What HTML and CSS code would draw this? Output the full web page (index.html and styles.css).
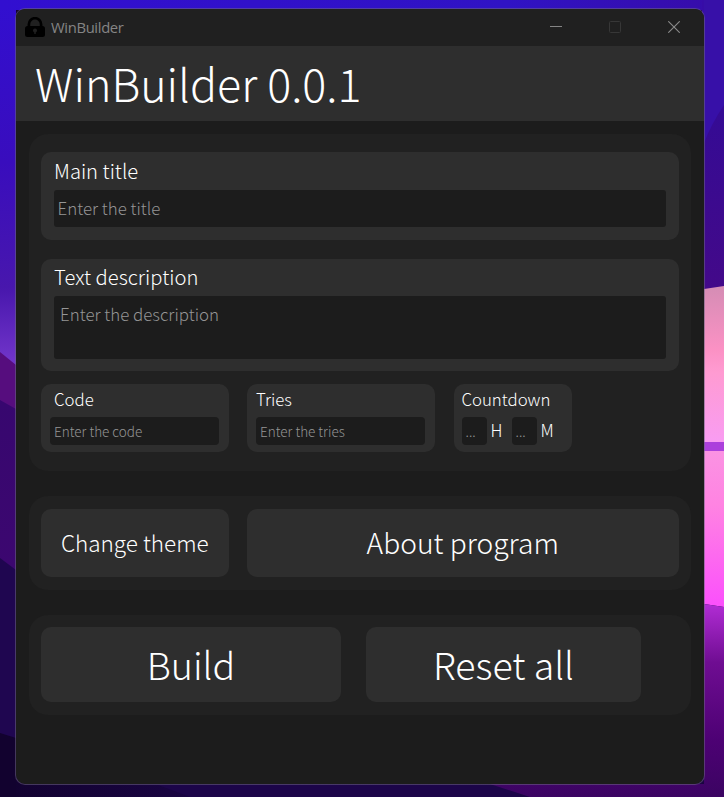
FILE: index.html
```html
<!DOCTYPE html>
<html lang="en">
<head>
<meta charset="utf-8">
<title>WinBuilder</title>
<link rel="stylesheet" href="styles.css">
</head>
<body>
<svg class="wallpaper" viewBox="0 0 724 797" preserveAspectRatio="none" aria-hidden="true">
  <defs>
    <linearGradient id="sky" x1="0" y1="0" x2="0" y2="360" gradientUnits="userSpaceOnUse"><stop offset="0" stop-color="#320fd0"/><stop offset=".45" stop-color="#390dbd"/><stop offset=".8" stop-color="#4817ad"/><stop offset="1" stop-color="#7034c9"/></linearGradient>
    <linearGradient id="top" x1="0" y1="0" x2="724" y2="0" gradientUnits="userSpaceOnUse"><stop offset="0" stop-color="#320fd0"/><stop offset=".7" stop-color="#3013c4"/><stop offset="1" stop-color="#370ca8"/></linearGradient>
    <linearGradient id="left" x1="0" y1="400" x2="0" y2="570" gradientUnits="userSpaceOnUse"><stop offset="0" stop-color="#37076f"/><stop offset="1" stop-color="#3c0770"/></linearGradient>
    <linearGradient id="right" x1="0" y1="0" x2="0" y2="290" gradientUnits="userSpaceOnUse"><stop offset="0" stop-color="#370ca8"/><stop offset=".4" stop-color="#350b94"/><stop offset="1" stop-color="#430989"/></linearGradient>
    <linearGradient id="pink" x1="0" y1="288" x2="0" y2="442" gradientUnits="userSpaceOnUse"><stop offset="0" stop-color="#d68db5"/><stop offset=".4" stop-color="#fb91c4"/><stop offset=".55" stop-color="#ff9bd2"/><stop offset="1" stop-color="#f99cf2"/></linearGradient>
    <linearGradient id="pinkLow" x1="0" y1="451" x2="0" y2="606" gradientUnits="userSpaceOnUse"><stop offset="0" stop-color="#fb93e3"/><stop offset=".35" stop-color="#ff83e2"/><stop offset="1" stop-color="#fb50fc"/></linearGradient>
    <linearGradient id="violet" x1="0" y1="605" x2="0" y2="797" gradientUnits="userSpaceOnUse"><stop offset="0" stop-color="#b02cd3"/><stop offset=".3" stop-color="#6f0d92"/><stop offset=".7" stop-color="#4d0174"/><stop offset="1" stop-color="#3b0462"/></linearGradient>
    <linearGradient id="floor" x1="0" y1="0" x2="724" y2="0" gradientUnits="userSpaceOnUse"><stop offset="0" stop-color="#12022f"/><stop offset=".35" stop-color="#1b0548"/><stop offset="1" stop-color="#1a0441"/></linearGradient>
  </defs>
  <rect width="724" height="797" fill="url(#floor)"/>
  <rect width="16" height="370" fill="url(#sky)"/>
  <rect width="724" height="10" fill="url(#top)"/>
  <path d="M0 352L16 365V575H0z" fill="#560d7e"/>
  <path d="M0 400L16 409V575H0z" fill="url(#left)"/>
  <path d="M0 558L16 570V739H0z" fill="#1f0650"/>
  <path d="M0 733L16 738V797H0z" fill="#12022f"/>
  <path d="M158 785H520V797H190z" fill="#1c0549"/>
  <path d="M702 0H724V290H702z" fill="url(#right)"/>
  <path d="M724 105Q712 123 704 143V0H724z" fill="#3710a8"/>
  <path d="M704 289L724 286V443H704z" fill="url(#pink)"/>
  <path d="M704 442H724V452H704z" fill="#ac40dc"/>
  <path d="M704 451H724V607L704 604z" fill="url(#pinkLow)"/>
  <path d="M704 604L724 607V797H530L490 784H704z" fill="url(#violet)"/>
</svg>
<main class="window">
  <div class="titlebar">
    <svg class="lock" viewBox="0 0 20 20" aria-hidden="true"><path d="M3.9 10V7.2a6.1 6 0 0 1 12.2 0V10" fill="none" stroke="#000" stroke-width="2.7"/><rect y="9" width="20" height="11" rx="2.5"/><circle cx="10" cy="13.5" r="2" fill="#202020"/><path d="M9.3 14h1.4v3H9.3z" fill="#202020"/></svg>
    <span class="app-name">WinBuilder</span>
    <div class="controls">
      <svg viewBox="0 0 12 12"><path d="M0 5.5h12" stroke="#858585"/></svg>
      <svg viewBox="0 0 12 12"><rect x=".5" y=".5" width="11" height="11" rx="1" fill="none" stroke="#373737"/></svg>
      <svg viewBox="0 0 12 12"><path d="M.3.3l11.4 11.4M11.7.3L.3 11.7" stroke="#8b8b8b" stroke-width="1.1"/></svg>
    </div>
  </div>
  <header class="header"><h1>WinBuilder 0.0.1</h1></header>
  <section class="panel form">
    <label class="card wide title-card"><span>Main title</span><input placeholder="Enter the title"></label>
    <label class="card wide desc-card"><span>Text description</span><textarea placeholder="Enter the description"></textarea></label>
    <div class="row fields">
      <label class="card small"><span class="code-label">Code</span><input placeholder="Enter the code"></label>
      <label class="card small"><span>Tries</span><input placeholder="Enter the tries"></label>
      <div class="card small countdown"><span>Countdown</span><div class="time"><input placeholder="..." aria-label="Hours"><span>H</span><input placeholder="..." aria-label="Minutes"><span>M</span></div></div>
    </div>
  </section>
  <section class="panel row options"><button class="theme">Change theme</button><button class="about">About program</button></section>
  <section class="panel row actions"><button class="build">Build</button><button class="reset">Reset all</button></section>
</main>
</body>
</html>
```
FILE: styles.css
```css
* { box-sizing: border-box; }
body {
  margin: 0;
  width: 724px;
  height: 797px;
  padding: 8px 19px 12px 15px;
  overflow: hidden;
  color: #fff;
  font-family: "Noto Sans CJK SC", sans-serif;
  font-weight: 300;
}
.wallpaper { position: absolute; inset: 0; z-index: -1; width: 724px; height: 797px; }
.window {
  width: 690px;
  height: 777px;
  overflow: hidden;
  background: #1c1c1c;
  background-clip: padding-box;
  border: 1px solid rgba(110, 100, 130, .55);
  border-radius: 10px;
}
.titlebar { display: flex; align-items: center; height: 37px; padding: 0 24px 1px 9px; background: #202020; }
.lock { width: 20px; height: 20px; margin-right: 6px; }
.app-name { font: 400 14.8px/20px "Open Sans", sans-serif; color: #858585; letter-spacing: -.35px; }
.controls { display: flex; gap: 46px; margin-left: auto; }
.controls svg { width: 12px; height: 12px; }
.controls svg:first-child { margin-right: 1px; }
.controls svg:last-child { margin-left: 1px; }
.header { height: 75px; padding-left: 19px; background: #2e2e2e; }
h1 { margin: 0; font-size: 44.8px; line-height: 73px; font-weight: 300; white-space: nowrap; }
.panel { width: 662px; margin-left: 13px; padding: 0 12px; background: #212121; border-radius: 19px; }
.form { height: 337px; margin-top: 13px; padding-top: 18px; }
.card { display: block; background: #2e2e2e; border-radius: 10px; }
.card span { display: block; white-space: nowrap; }
.wide { width: 637.5px; padding: 0 12.5px 0 13px; }
.wide span { font-size: 20.2px; line-height: 38px; }
.title-card { height: 88px; margin-bottom: 19px; }
.desc-card { height: 112px; margin-bottom: 13px; }
.desc-card span { height: 37px; line-height: 35px; }
input, textarea {
  display: block;
  width: 100%;
  margin: 0;
  border: 0;
  border-radius: 3px;
  background: #1c1c1c;
  color: #fff;
  font: inherit;
  resize: none;
  outline: none;
}
::placeholder { color: #959595; opacity: 1; }
.title-card input { height: 37px; padding: 0 3.5px 2px; font-size: 16.9px; }
textarea { height: 62.5px; padding: 6px; font-size: 16.9px; line-height: 24px; overflow: hidden; }
.row { display: flex; }
.fields { gap: 18.5px; }
.small { width: 187.5px; height: 68px; padding: 0 9px; }
.small span { height: 33px; font-size: 16.8px; line-height: 31px; }
.small .code-label { padding-left: 4px; }
.small input { width: 168.5px; height: 28px; padding: 0 4px; border-radius: 4px; font-size: 13.5px; }
.small.countdown { width: 118px; margin-left: .5px; padding: 0 8px; }
.time { display: flex; align-items: center; }
.time span { width: 25px; height: 28px; padding-left: 4px; line-height: 26px; }
.small .time input { width: 25px; }
.options { height: 94px; margin-top: 25px; padding-top: 13px; gap: 18.5px; }
.actions { height: 100px; margin-top: 25px; padding-top: 12px; gap: 25px; }
button { padding: 0 0 2px; border: 0; border-radius: 10px; background: #2e2e2e; color: #fff; font-family: inherit; font-weight: 300; }
.theme { width: 187.5px; height: 68px; font-size: 22.5px; }
.about { width: 431.5px; height: 68px; padding-bottom: 4px; font-size: 28.2px; }
.build { width: 300px; height: 75px; font-size: 37.5px; }
.reset { width: 275px; height: 75px; font-size: 37.5px; }
```
